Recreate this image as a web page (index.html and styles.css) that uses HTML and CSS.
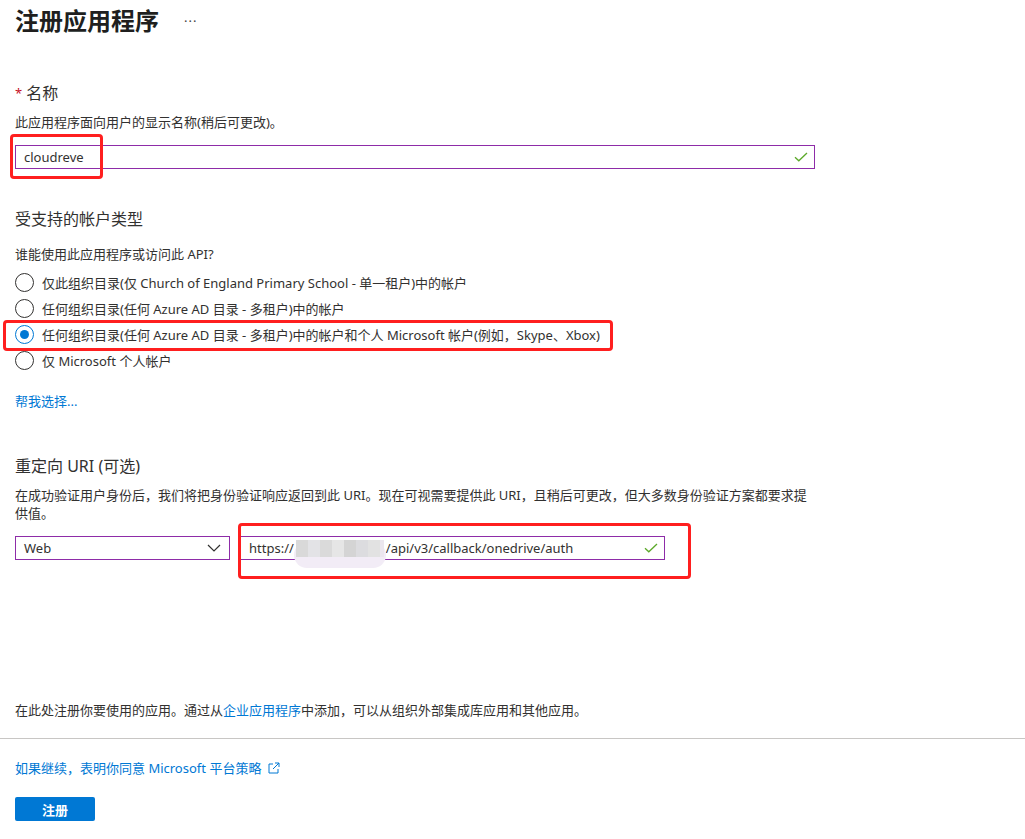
FILE: index.html
```html
<!DOCTYPE html>
<html>
<head>
<meta charset="utf-8">
<title>注册应用程序</title>
<link rel="stylesheet" href="styles.css">
</head>
<body>
<div class="page">
	<div class="head">
		<h1>注册应用程序</h1>
		<span class="more">···</span>
	</div>

	<div class="label-big name-label"><span class="req">*</span> 名称</div>
	<p class="desc gap-s">此应用程序面向用户的显示名称(稍后可更改)。</p>
	<div class="field name-field">
		<div class="textbox wide">
			<span>cloudreve</span>
			<svg class="ok" width="14" height="10" viewBox="0 0 14 10"><path d="M1 5.2 L4.8 8.8 L13 1" fill="none" stroke="#5ca92a" stroke-width="1.3"/></svg>
		</div>
		<div class="mark mark-name"></div>
	</div>

	<div class="label-big types-label">受支持的帐户类型</div>
	<p class="desc q">谁能使用此应用程序或访问此 API?</p>
	<div class="radios">
		<div class="radio"><span class="circle"></span>仅此组织目录(仅 Church of England Primary School - 单一租户)中的帐户</div>
		<div class="radio"><span class="circle"></span>任何组织目录(任何 Azure AD 目录 - 多租户)中的帐户</div>
		<div class="radio field"><span class="circle on"></span>任何组织目录(任何 Azure AD 目录 - 多租户)中的帐户和个人 Microsoft 帐户(例如，Skype、Xbox)
			<div class="mark mark-radio"></div>
		</div>
		<div class="radio"><span class="circle"></span>仅 Microsoft 个人帐户</div>
	</div>
	<a class="link help" href="#">帮我选择...</a>

	<div class="label-big uri-label">重定向 URI (可选)</div>
	<p class="desc gap-s uri-desc">在成功验证用户身份后，我们将把身份验证响应返回到此 URI。现在可视需要提供此 URI，且稍后可更改，但大多数身份验证方案都要求提供值。</p>
	<div class="uri-row field">
		<div class="textbox select">
			<span>Web</span>
			<svg width="14" height="8" viewBox="0 0 14 8"><path d="M1 1 L7 7 L13 1" fill="none" stroke="#323130" stroke-width="1.2"/></svg>
		</div>
		<div class="textbox uri">
			<span>https://<span class="blur"></span>/api/v3/callback/onedrive/auth</span>
			<svg class="ok" width="14" height="10" viewBox="0 0 14 10"><path d="M1 5.2 L4.8 8.8 L13 1" fill="none" stroke="#5ca92a" stroke-width="1.3"/></svg>
		</div>
		<div class="mark mark-uri"></div>
	</div>

	<p class="desc note">在此处注册你要使用的应用。通过从<a class="link" href="#">企业应用程序</a>中添加，可以从组织外部集成库应用和其他应用。</p>
</div>

<div class="footer">
	<a class="link policy" href="#">如果继续，表明你同意 Microsoft 平台策略
		<svg width="14" height="14" viewBox="0 0 14 14"><path d="M6 3 H2 V12 H11 V8" fill="none" stroke="#0078d4" stroke-width="1"/><path d="M8 2 H12 V6 M12 2 L6 8" fill="none" stroke="#0078d4" stroke-width="1"/></svg>
	</a>
	<button class="submit" type="button">注册</button>
</div>
</body>
</html>
```

FILE: styles.css
```css
body {
	margin: 0;
	background-color: #ffffff;
	color: #323130;
	font-family: "Noto Sans", "Noto Sans CJK SC", sans-serif;
	font-size: 13px;
}
.page {
	padding: 0 15px;
}
.head {
	display: flex;
	align-items: center;
	margin-top: 5px;
	height: 32px;
}
h1 {
	margin: 0;
	font-size: 24px;
	font-weight: bold;
	line-height: 32px;
	color: #201f1e;
}
.more {
	margin-left: 25px;
	font-size: 13px;
	color: #444;
	letter-spacing: 1px;
}
.label-big {
	font-size: 16px;
	line-height: 22px;
	color: #323130;
}
.name-label {
	margin-top: 45px;
}
.req {
	color: #c50f1f;
	font-size: 13px;
	vertical-align: top;
}
.desc {
	margin: 0;
	line-height: 18px;
	font-size: 13px;
}
.gap-s {
	margin-top: 9px;
}
.field {
	position: relative;
}
.name-field {
	margin-top: 14px;
}
.textbox {
	box-sizing: border-box;
	height: 24px;
	border: 1px solid #8e2ca8;
	display: flex;
	align-items: center;
	justify-content: space-between;
	padding: 0 6px 0 8px;
	font-size: 13px;
}
.wide {
	width: 800px;
}
.mark {
	position: absolute;
	border: 3px solid #ff1f1f;
	border-radius: 4px;
	box-sizing: border-box;
}
.mark-name {
	left: -5px;
	top: -11px;
	width: 93px;
	height: 45px;
}
.types-label {
	margin-top: 39px;
}
.q {
	margin-top: 15px;
}
.radios {
	margin-top: 6px;
}
.radio {
	display: flex;
	align-items: center;
	height: 26px;
}
.circle {
	box-sizing: border-box;
	width: 19px;
	height: 19px;
	border: 1px solid #323130;
	border-radius: 50%;
	margin: 0 8px 0 0;
	flex-shrink: 0;
	position: relative;
}
.circle.on {
	border-color: #0078d4;
}
.circle.on::after {
	content: "";
	position: absolute;
	left: 4px;
	top: 4px;
	width: 9px;
	height: 9px;
	border-radius: 50%;
	background-color: #0078d4;
}
.mark-radio {
	left: -12px;
	top: -1px;
	width: 610px;
	height: 31px;
}
.link {
	color: #0078d4;
	text-decoration: none;
}
.help {
	display: block;
	margin-top: 19px;
	line-height: 18px;
}
.uri-label {
	margin-top: 45px;
}
.uri-desc {
	width: 800px;
}
.uri-row {
	display: flex;
	margin-top: 14px;
}
.select {
	width: 215px;
	padding-right: 8px;
}
.uri {
	width: 425px;
	margin-left: 10px;
}
.blur {
	display: inline-block;
	position: relative;
	width: 92px;
	height: 16px;
	vertical-align: -3px;
}
.blur::before {
	content: "";
	position: absolute;
	left: 0;
	top: 2px;
	width: 92px;
	height: 26px;
	border-radius: 13px;
	background-color: #f2ecf6;
}
.blur::after {
	content: "";
	position: absolute;
	left: 2px;
	top: 0;
	width: 88px;
	height: 17px;
	background: linear-gradient(to right, #d9d9d9 0 12px, #e3e3e6 12px 24px, #dadada 24px 36px, #e6e6e6 36px 48px, #d4d4d4 48px 60px, #dcdcdf 60px 72px, #e2e2e2 72px 84px, #ebe6ee 84px 88px);
}
.mark-uri {
	left: 223px;
	top: -13px;
	width: 453px;
	height: 56px;
}
.note {
	margin-top: 141px;
}
.footer {
	margin-top: 19px;
	border-top: 1px solid #c8c6c4;
	padding: 20px 15px 0;
}
.policy {
	display: flex;
	align-items: center;
	line-height: 18px;
}
.policy svg {
	margin-left: 6px;
}
.submit {
	display: block;
	margin-top: 20px;
	width: 80px;
	height: 24px;
	border: none;
	border-radius: 2px;
	background-color: #0078d4;
	color: #ffffff;
	font-family: "Noto Sans", "Noto Sans CJK SC", sans-serif;
	font-size: 13px;
	font-weight: bold;
}
```
